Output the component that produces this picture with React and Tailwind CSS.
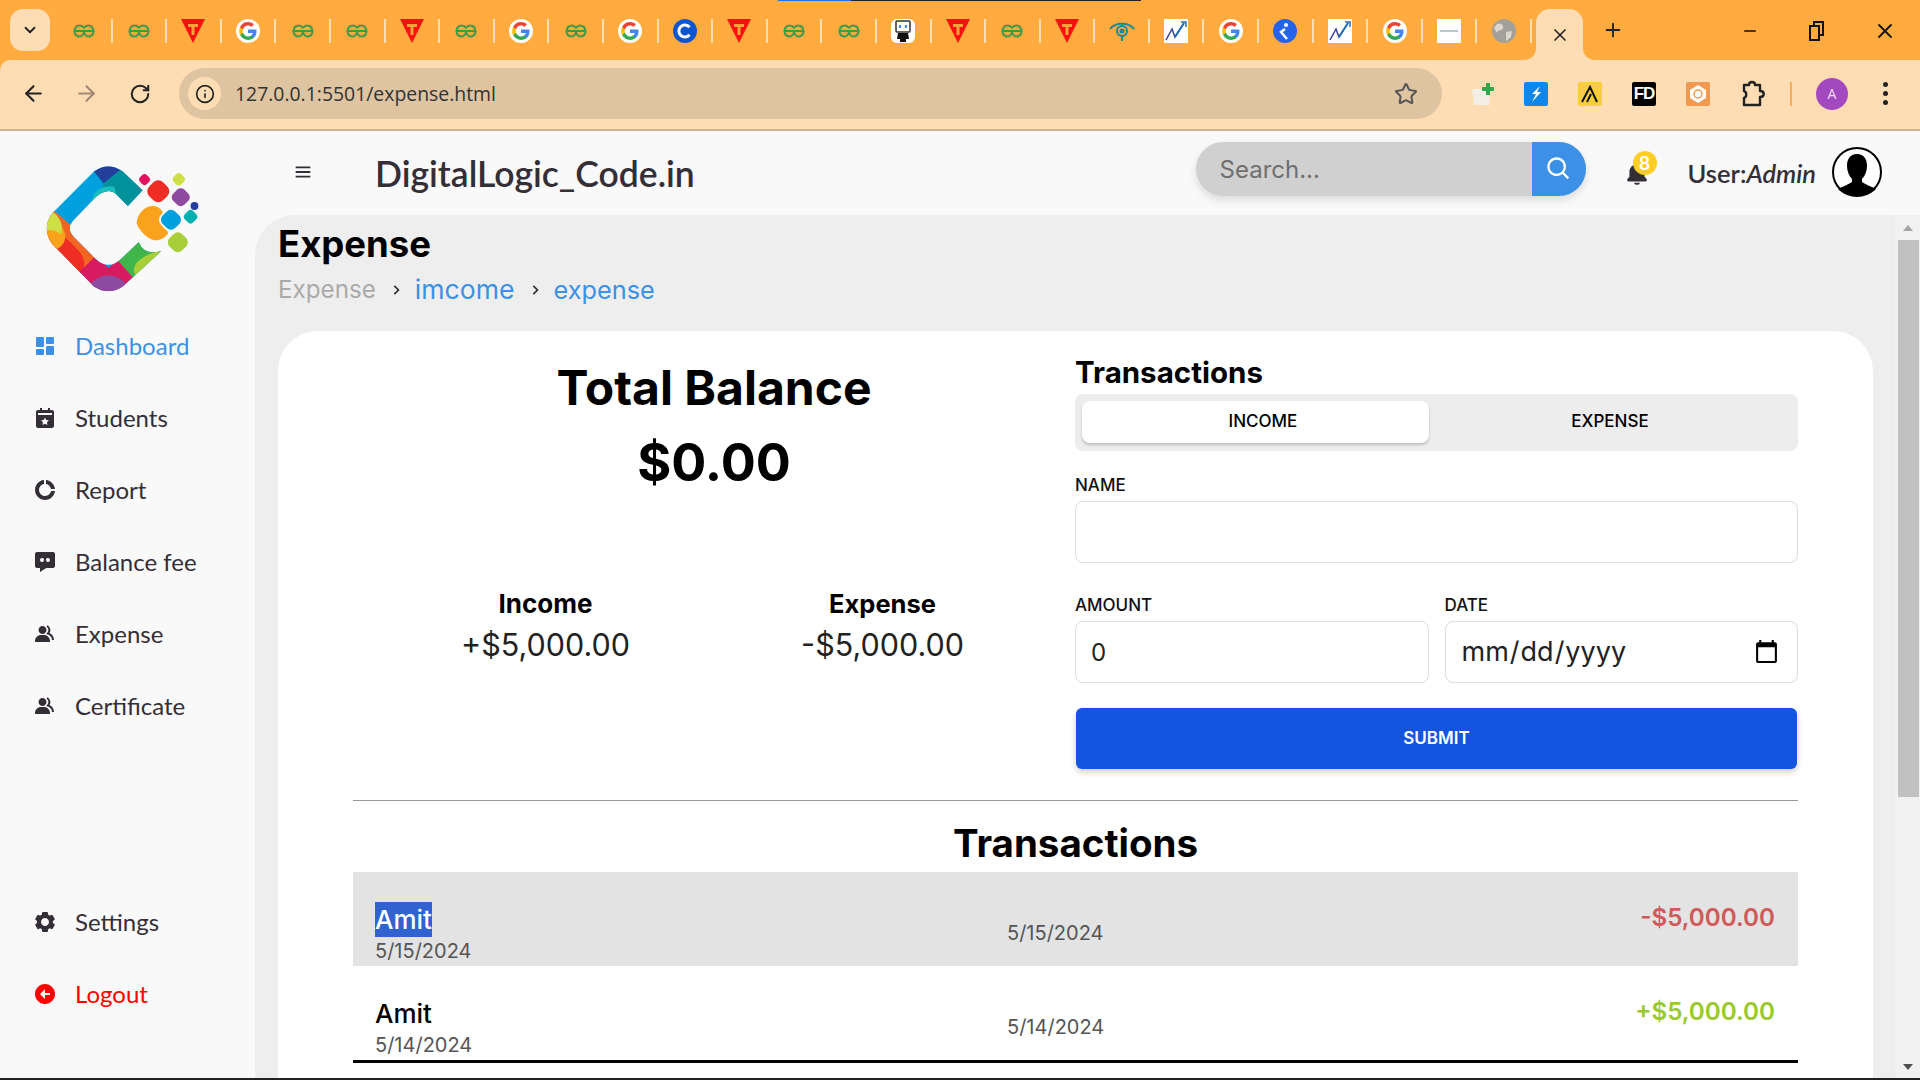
import {
  BiSolidDashboard, BiSolidCalendarStar, BiSolidDoughnutChart, BiSolidMessageDots, BiSolidGroup,
  BiSolidCog, BiSolidLeftArrowCircle, BiSolidBell, BiSearch, BiMenu, BiChevronRight,
} from 'react-icons/bi';
import { ArrowLeft, ArrowRight, RotateCw, Star, Plus, X, Minus, ChevronDown, Info } from 'lucide-react';

const POP = 'font-["Inter",sans-serif]';

/* ─── Favicons ─── */

function Gfg() {
  return (
    <svg width="22" height="14" viewBox="0 0 22 14" fill="none" stroke="#3d9a4a" strokeWidth="2">
      <path d="M11 7H20.5C20 3 17.5 1.5 15 1.5C13 1.5 12 2.5 11 4M11 7H1.5C2 3 4.5 1.5 7 1.5C9 1.5 10 2.5 11 4M11 7C11 9 9.5 12.5 7 12.5C4 12.5 2 10.5 1.5 8M11 7C11 9 12.5 12.5 15 12.5C18 12.5 20 10.5 20.5 8" />
    </svg>
  );
}

function TFav() {
  return (
    <svg width="24" height="24" viewBox="0 0 24 24">
      <path d="M0 0H24L12 24Z" fill="#fb0f0f" />
      <path d="M7 5H17V8H13.5V16H10.5V8H7Z" fill="#f9a23a" />
    </svg>
  );
}

function GoogleFav() {
  return (
    <svg width="24" height="24" viewBox="0 0 48 48">
      <circle cx="24" cy="24" r="24" fill="#fff" />
      <path fill="#4285F4" d="M41 24.5c0-1.3-.1-2.500-.3-3.700H24v7h9.600c-.4 2.200-1.700 4.100-3.600 5.400v4.500h5.800c3.400-3.100 5.200-7.700 5.200-13.200z" />
      <path fill="#34A853" d="M24 42c4.900 0 8.900-1.600 11.800-4.300L30 33.200c-1.600 1.100-3.600 1.700-6 1.700-4.600 0-8.500-3.100-9.900-7.300H8.200v4.600C11.100 38 17.100 42 24 42z" />
      <path fill="#FBBC05" d="M14.100 27.600c-.4-1.100-.6-2.300-.6-3.600s.2-2.500.6-3.600v-4.600H8.200C7 18.200 6.300 21 6.300 24s.7 5.800 1.900 8.200l5.900-4.600z" />
      <path fill="#EA4335" d="M24 13.100c2.600 0 5 .9 6.800 2.700l5.100-5.100C32.900 7.800 28.900 6 24 6 17.100 6 11.100 10 8.200 15.800l5.900 4.600c1.400-4.200 5.300-7.300 9.900-7.300z" />
    </svg>
  );
}

function CFav() {
  return (
    <svg width="24" height="24" viewBox="0 0 24 24">
      <circle cx="12" cy="12" r="12" fill="#0b56d0" />
      <path d="M16.500 8.200A6 6 0 1 0 16.500 15.800" fill="none" stroke="#fff" strokeWidth="3" />
    </svg>
  );
}

function RobotFav() {
  return (
    <svg width="24" height="24" viewBox="0 0 24 24">
      <rect width="24" height="24" rx="6" fill="#fff" />
      <rect x="5" y="2" width="14" height="11" rx="1" fill="#fff" stroke="#333" strokeWidth="1.500" />
      <rect x="8" y="6" width="2" height="3" fill="#3a8fe0" />
      <rect x="14" y="6" width="2" height="3" fill="#3a8fe0" />
      <path d="M7 14H17L18 20H15V23H9V20H6Z" fill="#111" />
    </svg>
  );
}

function EyeFav() {
  return (
    <svg width="26" height="22" viewBox="0 0 26 22" fill="none" stroke="#188a92" strokeWidth="2">
      <path d="M1 9C6 2 20 2 25 9" />
      <circle cx="13" cy="11" r="5" />
      <circle cx="13" cy="11" r="1.500" fill="#188a92" />
      <path d="M13 16V21" />
    </svg>
  );
}

function ChartFav() {
  return (
    <svg width="24" height="24" viewBox="0 0 24 24">
      <rect width="24" height="24" fill="#fff" />
      <path d="M2 21L8 10L11 18L20 4" fill="none" stroke="#3b3fa0" strokeWidth="1.500" />
      <path d="M11 18L20 4" fill="none" stroke="#1f6fc0" strokeWidth="1.800" />
      <path d="M17 3H22V8" fill="none" stroke="#1f6fc0" strokeWidth="1.500" />
    </svg>
  );
}

function KFav() {
  return (
    <svg width="24" height="24" viewBox="0 0 24 24">
      <circle cx="12" cy="12" r="12" fill="#2563eb" />
      <circle cx="13" cy="6" r="2" fill="#fff" />
      <path d="M12 10L8 13L14 20" fill="none" stroke="#fff" strokeWidth="2.500" />
    </svg>
  );
}

function DocFav() {
  return (
    <svg width="24" height="24" viewBox="0 0 24 24">
      <rect width="24" height="24" fill="#fff" />
      <rect x="3" y="11" width="18" height="2" fill="#b5c9c9" />
    </svg>
  );
}

function GlobeFav() {
  return (
    <svg width="24" height="24" viewBox="0 0 24 24">
      <circle cx="12" cy="12" r="12" fill="#a3a09a" />
      <path d="M5 5C9 4 12 6 11 9C10 12 6 10 5 14L2 9ZM14 13L20 12L19 18L14 22Z" fill="#ddd8cf" />
    </svg>
  );
}

const FAVS = { g: Gfg, T: TFav, G: GoogleFav, C: CFav, r: RobotFav, e: EyeFav, c: ChartFav, k: KFav, d: DocFav, o: GlobeFav };
const TAB_LIST = ['g', 'g', 'T', 'G', 'g', 'g', 'T', 'g', 'G', 'g', 'G', 'C', 'T', 'g', 'g', 'r', 'T', 'g', 'T', 'e', 'c', 'G', 'k', 'c', 'G', 'd', 'o'];

function TabStrip() {
  return (
    <div className="relative h-[60px] shrink-0 bg-[#ffab40] flex items-start">
      <div className="absolute top-0 left-[778px] h-[1px] w-[73px] bg-[#1a73e8]" />
      <div className="absolute top-0 left-[851px] h-[1px] w-[290px] bg-[#222]" />
      <div className="ml-[10px] mt-[9px] w-[40px] h-[42px] rounded-[13px] bg-[#ffddb4] flex items-center justify-center text-[#222]">
        <ChevronDown size={18} strokeWidth={2.500} />
      </div>
      <div className="ml-[8px] flex mt-[19px] shrink-0">
        {TAB_LIST.map((t, i) => {
          const Fav = FAVS[t];
          return (
            <div key={i} className="w-[54.600px] shrink-0 h-[24px] flex items-center justify-center border-r-2 border-[#ffddb4]">
              <Fav />
            </div>
          );
        })}
      </div>
      <div className="relative ml-[4px] mt-[9px] w-[47px] h-[51px] bg-[#ffddb4] rounded-t-[14px] flex items-center justify-center text-[#222]">
        <svg className="absolute bottom-0 -left-[12px]" width="12" height="12" viewBox="0 0 12 12"><path d="M12 0V12H0C7 12 12 7 12 0Z" fill="#ffddb4" /></svg>
        <svg className="absolute bottom-0 -right-[12px]" width="12" height="12" viewBox="0 0 12 12"><path d="M0 0V12H12C5 12 0 7 0 0Z" fill="#ffddb4" /></svg>
        <X size={20} strokeWidth={2} />
      </div>
      <div className="ml-[19px] mt-[19px] text-[#222]">
        <Plus size={22} strokeWidth={2} />
      </div>
      <div className="ml-auto flex items-center mt-[19px] text-[#111]">
        <Minus size={18} strokeWidth={2} />
        <svg className="ml-[50px]" width="16" height="22" viewBox="0 0 16 22" fill="none" stroke="#111" strokeWidth="2">
          <rect x="1" y="6" width="9" height="14" />
          <path d="M5 6V2H14V15H10" />
        </svg>
        <X className="ml-[48px] mr-[23px]" size={24} strokeWidth={1.800} />
      </div>
    </div>
  );
}

function ExtBox({ bg, children, className = '' }) {
  return (
    <div className={`w-[24px] h-[24px] flex items-center justify-center rounded-[2px] ${className}`} style={{ backgroundColor: bg }}>
      {children}
    </div>
  );
}

function Toolbar() {
  return (
    <div className="h-[71px] shrink-0 bg-[#ffddb4] border-b-2 border-[#cfb28f] rounded-tl-[10px] flex items-center pb-[2px] text-[#222]">
      <ArrowLeft className="ml-[21px]" size={25} strokeWidth={2} />
      <ArrowRight className="ml-[28px] text-[#a08a72]" size={25} strokeWidth={2} />
      <RotateCw className="ml-[30px]" size={22} strokeWidth={2.200} />
      <div className="ml-[28px] w-[1263px] h-[51px] rounded-full bg-[#dec4a1] flex items-center pl-[9px] pr-[24px]">
        <div className="w-[33px] h-[33px] rounded-full bg-[#ffddb4] flex items-center justify-center">
          <Info size={20} strokeWidth={2} />
        </div>
        <span className='ml-[14px] text-[19.400px] font-["Open_Sans",sans-serif] text-[#333]'>127.0.0.1:5501/expense.html</span>
        <Star className="ml-auto text-[#555]" size={24} strokeWidth={2} />
      </div>
      <svg className="ml-[28px]" width="26" height="26" viewBox="0 0 26 26">
        <path d="M2 8H18L20 24H4Z" fill="#f4efe6" />
        <path d="M12 6H16V2H20V6H24V10H20V14H16V10H12Z" fill="#2fa84f" />
      </svg>
      <ExtBox bg="#0f86ea" className="ml-[28px]">
        <svg width="14" height="18" viewBox="0 0 14 18"><path d="M11 1L3 9H7L3 17L12 7H8Z" fill="#fff" /></svg>
      </ExtBox>
      <ExtBox bg="#f8cf3a" className="ml-[30px]">
        <svg width="20" height="20" viewBox="0 0 20 20" fill="none" stroke="#111" strokeWidth="2"><path d="M2 18L10 3L17 18M7 18L11 10" /></svg>
      </ExtBox>
      <ExtBox bg="#000" className='ml-[30px] text-white text-[17px] tracking-[-1px] font-bold font-["Liberation_Sans",sans-serif]'>FD</ExtBox>
      <ExtBox bg="#ef9a4f" className="ml-[30px]">
        <svg width="18" height="18" viewBox="0 0 18 18"><path d="M9 0L17 5V13L9 18L1 13V5Z" fill="#fff" /><circle cx="9" cy="9" r="4" fill="none" stroke="#ef9a4f" strokeWidth="1.500" /></svg>
      </ExtBox>
      <svg className="ml-[30px]" width="26" height="28" viewBox="0 0 26 28" fill="none" stroke="#222" strokeWidth="2.400" strokeLinejoin="round">
        <path d="M4 5H9C9 1 15 1 15 5H20V11C25 11 25 17 20 17V25H4V18C7 17 7 12 4 11Z" />
      </svg>
      <div className="ml-[24px] w-[2px] h-[24px] bg-[#f5ad5a]" />
      <div className="ml-[24px] w-[32px] h-[32px] rounded-full bg-[#a349c0] text-[#f3dcf7] text-[14px] flex items-center justify-center font-['Open_Sans',sans-serif]">A</div>
      <div className="ml-[35px] flex flex-col gap-[4px]">
        <span className="w-[5px] h-[5px] rounded-full bg-[#222]" />
        <span className="w-[5px] h-[5px] rounded-full bg-[#222]" />
        <span className="w-[5px] h-[5px] rounded-full bg-[#222]" />
      </div>
    </div>
  );
}

/* ─── Sidebar ─── */

function Logo() {
  const ring = 'M114 39L94 20Q79 9 64 20L22 62Q10 78 22 94L64 137Q79 147 94 137L133 101Q116 106 110 92L92 109Q79 121 66 109L43 86Q36 78 43 70L66 46Q79 35 87 43L99 55Z';
  return (
    <svg width="186" height="157" viewBox="0 0 190 160">
      <defs>
        <clipPath id="logoRing"><path d={ring} /></clipPath>
      </defs>
      <g clipPath="url(#logoRing)">
        <rect width="190" height="160" fill="#00a0df" />
        <path d="M60 14H100L74 32Z" fill="#243e9b" />
        <path d="M74 32L96 14L120 40L99 60L70 50Z" fill="#00919b" />
        <path d="M62 52C62 40 72 34 85 35L88 46L68 50Z" fill="#19bdbe" />
        <path d="M24 60L42 76L66 108L46 125L5 90L5 70Z" fill="#f26522" />
        <path d="M16 88C24 80 32 84 40 92C52 102 58 112 52 122L46 128L10 100Z" fill="#ef2d25" />
        <ellipse cx="21" cy="86" rx="14" ry="14" fill="#faa21b" />
        <path d="M5 62H24C34 72 32 80 30 84C24 78 14 78 5 84Z" fill="#cedf45" />
        <path d="M48 124L66 106L79 118L90 110L106 128L90 150H64Z" fill="#d81b60" />
        <ellipse cx="79" cy="146" rx="22" ry="20" fill="#8e4a9e" />
        <path d="M88 110L110 88L140 100L106 130Z" fill="#3fb54a" />
        <path d="M136 98C122 104 105 108 105 122L108 128Z" fill="#a8cf38" />
      </g>
      <rect x="111" y="23" width="10" height="10" rx="4" fill="#e2125f" transform="rotate(45 116 28)" />
      <rect x="120" y="30" width="20" height="20" rx="7" fill="#ef2d25" transform="rotate(45 130 40)" />
      <rect x="146" y="22" width="11" height="11" rx="4" fill="#cedf45" transform="rotate(45 151 27)" />
      <rect x="145" y="38" width="16" height="16" rx="5" fill="#8e4a9e" transform="rotate(45 153 46)" />
      <circle cx="167" cy="55" r="4" fill="#243e9b" />
      <rect x="157" y="60" width="12" height="12" rx="4" fill="#00b1b0" transform="rotate(45 163 66)" />
      <path d="M124 55C112 56 108 68 108 72C108 76 118 90 128 90C132 90 137 87 140 83L136 66L134 60C132 57 128 55 124 55Z" fill="#faa21b" />
      <rect x="133" y="59" width="20" height="20" rx="7" fill="#00a0df" stroke="#f9f9f9" strokeWidth="2" transform="rotate(45 143 69)" />
      <rect x="141" y="83" width="18" height="18" rx="6" fill="#a8cf38" transform="rotate(45 150 92)" />
    </svg>
  );
}

function NavItem({ icon: Icon, label, color = 'text-[#342e37]' }) {
  return (
    <div className={`h-[72px] flex items-center pl-[33px] ${color}`}>
      <Icon size={24} className="w-[24px]" />
      <span className="ml-[18px] text-[24px]">{label}</span>
    </div>
  );
}

function Sidebar() {
  return (
    <aside className='w-[255px] shrink-0 bg-[#f9f9f9] flex flex-col font-["Lato",sans-serif]'>
      <div className="ml-[31px] mt-[21px] h-[158px]"><Logo /></div>
      <nav>
        <NavItem icon={BiSolidDashboard} label="Dashboard" color="text-[#3c91e6]" />
        <NavItem icon={BiSolidCalendarStar} label="Students" />
        <NavItem icon={BiSolidDoughnutChart} label="Report" />
        <NavItem icon={BiSolidMessageDots} label="Balance fee" />
        <NavItem icon={BiSolidGroup} label="Expense" />
        <NavItem icon={BiSolidGroup} label="Certificate" />
      </nav>
      <div className="mt-[144px]">
        <NavItem icon={BiSolidCog} label="Settings" />
        <NavItem icon={BiSolidLeftArrowCircle} label="Logout" color="text-[#ff0000]" />
      </div>
    </aside>
  );
}

/* ─── Header ─── */

function Avatar() {
  return (
    <svg width="50" height="50" viewBox="0 0 50 50">
      <circle cx="25" cy="25" r="24" fill="#fff" stroke="#000" strokeWidth="2" />
      <path d="M25 7C18 7 15 12 15 19C15 24 17 29 20 32V35C16 38 9 40 6 42C11 47 18 49 25 49C32 49 39 47 44 42C41 40 34 38 30 35V32C33 29 35 24 35 19C35 12 32 7 25 7Z" fill="#000" />
    </svg>
  );
}

function Header() {
  return (
    <header className='h-[84px] shrink-0 bg-[#f9f9f9] flex items-center font-["Lato",sans-serif] text-[#342e37]'>
      <BiMenu className="ml-[37px] mb-[2px]" size={22} />
      <h1 className="ml-[61px] mt-[2px] text-[35.500px] font-semibold leading-none">DigitalLogic_Code.in</h1>
      <div className="ml-auto w-[390px] h-[54px] rounded-full bg-[#d0d0d0] flex overflow-hidden shadow-[0_4px_8px_rgba(0,0,0,0.12)] mb-[8px]">
        <input
          readOnly
          placeholder="Search..."
          className={`flex-1 min-w-0 bg-transparent pl-[24px] pt-[2px] text-[24px] placeholder:text-[#6f6f6f] outline-none ${POP}`}
        />
        <div className="w-[54px] bg-[#3c91e6] flex items-center justify-center text-white"><BiSearch size={28} /></div>
      </div>
      <div className="relative ml-[38px] w-[26px] mt-[2px]">
        <BiSolidBell size={26} />
        <span className={`absolute -top-[10px] left-[9px] w-[24px] h-[24px] rounded-full bg-[#ffce26] text-white text-[18px] font-semibold flex items-center justify-center ${POP}`}>8</span>
      </div>
      <p className="ml-[38px] text-[25.500px] whitespace-nowrap font-semibold">User:<em>Admin</em></p>
      <div className="ml-[16px] mr-[38px] mb-[2px]"><Avatar /></div>
    </header>
  );
}

/* ─── Main ─── */

function Field({ label, children, className = '' }) {
  return (
    <div className={className}>
      <div className="h-[24px] flex items-center text-[17px] font-medium text-[#111] uppercase">{label}</div>
      {children}
    </div>
  );
}

const inputCls = 'w-full h-[62px] rounded-[8px] border border-[#ddd] bg-white px-[15px] text-[#222] outline-none';

function TxRow({ date, amount, amountColor, selected }) {
  return (
    <div className={`h-[94px] flex items-start pl-[22px] pr-[23px] ${selected ? 'bg-[#e3e3e3]' : 'bg-white'}`}>
      <div className="w-[632px] pt-[30px]">
        <div className="h-[35px] leading-[35px] text-[26px] font-medium">
          {selected ? <span className="bg-[#3062d0] text-white inline-block">Amit</span> : <span className="text-black">Amit</span>}
        </div>
        <div className="text-[20px] leading-[28px] text-[#555]">{date}</div>
      </div>
      <div className="pt-[47px] text-[20px] leading-[28px] text-[#555]">{date}</div>
      <div className={`ml-auto pt-[28px] text-[24.200px] leading-[36px] font-semibold ${amountColor}`}>{amount}</div>
    </div>
  );
}

function BalanceCard() {
  return (
    <div className={`w-[1595px] shrink-0 bg-white rounded-t-[40px] pt-[25px] px-[75px] ${POP} text-black`}>
      <div className="flex">
        <div className="w-[722px] shrink-0">
          <div className="text-center mt-[4px]">
            <h2 className="text-[48px] leading-[56px] font-bold">Total Balance</h2>
            <div className="mt-[19px] text-[52px] leading-[56px] font-bold">$0.00</div>
          </div>
          <div className="flex mt-[96px] text-center">
            <div className="w-[337px] ml-[24px]">
              <h4 className="text-[26px] leading-[34px] font-bold">Income</h4>
              <p className="mt-[2px] text-[30.500px] leading-[44px] text-[#222]">+$5,000.00</p>
            </div>
            <div className="w-[337px]">
              <h4 className="text-[25.500px] leading-[34px] font-bold">Expense</h4>
              <p className="mt-[2px] text-[30.500px] leading-[44px] text-[#222]">-$5,000.00</p>
            </div>
          </div>
        </div>
        <div className="flex-1 min-w-0">
          <h3 className="text-[29.500px] leading-[32px] font-bold">Transactions</h3>
          <div className="mt-[6px] h-[57px] rounded-[8px] bg-[#ededed] flex px-[7px] pt-[7px] text-[17px] font-medium">
            <div className="w-[347px] h-[42px] rounded-[8px] bg-white shadow-[0_2px_3px_rgba(0,0,0,0.2)] flex items-center justify-center pl-[15px]">INCOME</div>
            <div className="flex-1 h-[42px] flex items-center justify-center">EXPENSE</div>
          </div>
          <Field label="Name" className="mt-[23px]">
            <input readOnly className={`${inputCls} text-[24px] mt-[3px]`} />
          </Field>
          <div className="mt-[31px] grid grid-cols-2 gap-[16px]">
            <Field label="Amount">
              <input readOnly value="0" className={`${inputCls} text-[24px] mt-[3px]`} />
            </Field>
            <Field label="Date">
              <input type="date" className={`${inputCls} text-[27px] mt-[3px]`} />
            </Field>
          </div>
          <div className="mt-[25px] mx-[1px] h-[61px] rounded-[6px] bg-[#1554e1] shadow-[0_3px_6px_rgba(0,0,0,0.2)] text-white text-[17px] font-semibold flex items-center justify-center">SUBMIT</div>
        </div>
      </div>
      <div className="mt-[31px] border-t-[1.500px] border-[#999]" />
      <h2 className="mt-[20px] mb-[7px] text-center text-[38.500px] leading-[44px] font-bold">Transactions</h2>
      <TxRow selected date="5/15/2024" amount="-$5,000.00" amountColor="text-[#d05a5a]" />
      <TxRow date="5/14/2024" amount="+$5,000.00" amountColor="text-[#9ac92f]" />
      <div className="h-[3px] bg-black" />
    </div>
  );
}

function Main() {
  return (
    <main className="flex-1 min-h-0 bg-[#eeeeee] rounded-tl-[40px] flex overflow-hidden">
      <div className="flex-1 flex flex-col pl-[23px] min-w-0">
        <h1 className={`mt-[7px] text-[36.500px] leading-[44px] font-bold text-black ${POP}`}>Expense</h1>
        <div className={`mt-[6px] h-[36px] flex items-center ${POP}`}>
          <span className="text-[24.200px] text-[#aaa]">Expense</span>
          <BiChevronRight className="ml-[10px] text-[#342e37]" size={20} />
          <span className="ml-[9px] text-[26.600px] text-[#3c91e6]">imcome</span>
          <BiChevronRight className="ml-[10px] text-[#342e37]" size={20} />
          <span className="ml-[9px] text-[25.300px] text-[#3c91e6]">expense</span>
        </div>
        <div className="mt-[23px] flex-1 flex min-h-0">
          <BalanceCard />
        </div>
      </div>
      <div className="w-[25px] shrink-0 bg-[#f1f1f1] flex flex-col items-center">
        <div className="mt-[10px] w-0 h-0 border-x-[5px] border-x-transparent border-b-[6px] border-b-[#a3a3a3]" />
        <div className="mt-[9px] ml-[2px] w-[21px] h-[557px] bg-[#c1c1c1]" />
        <div className="mt-auto mb-[8px] w-0 h-0 border-x-[5px] border-x-transparent border-t-[6px] border-t-[#505050]" />
      </div>
    </main>
  );
}

export default function App() {
  return (
    <div className="w-[1920px] h-[1080px] flex flex-col overflow-hidden bg-[#ffab40]">
      <TabStrip />
      <Toolbar />
      <div className="flex-1 min-h-0 flex bg-[#f9f9f9]">
        <Sidebar />
        <div className="flex-1 min-w-0 flex flex-col">
          <Header />
          <Main />
        </div>
      </div>
      <div className="h-[2px] shrink-0 bg-[#222]" />
    </div>
  );
}
